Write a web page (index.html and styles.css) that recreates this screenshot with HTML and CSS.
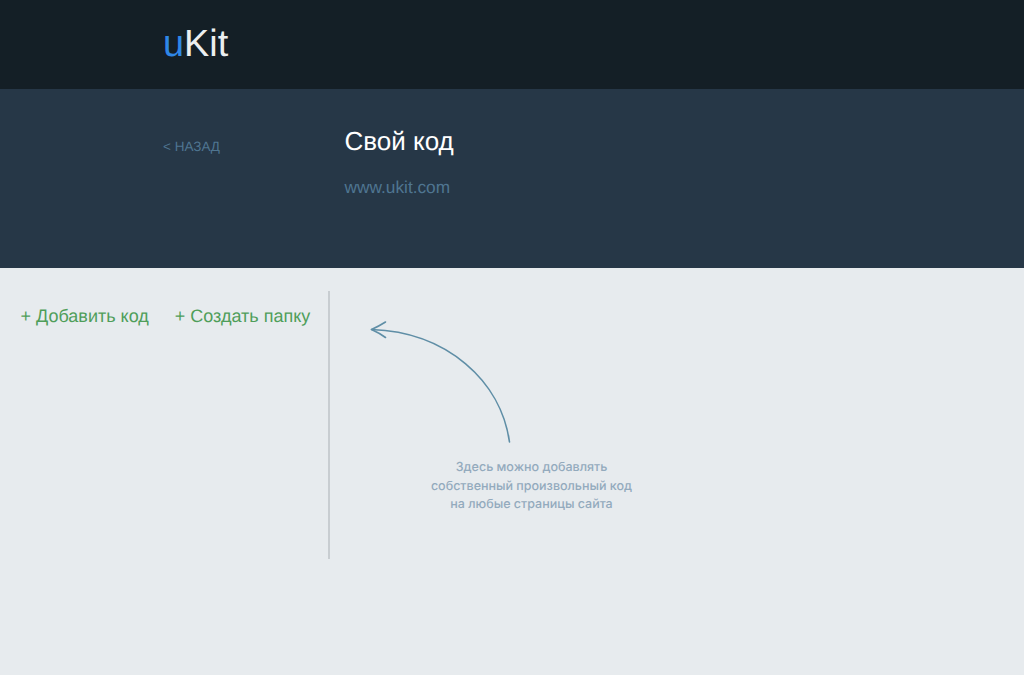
FILE: index.html
```html
<!DOCTYPE html>
<html lang="ru">
<head>
<meta charset="utf-8">
<title>uKit</title>
<link rel="stylesheet" href="styles.css">
</head>
<body>
<header class="topbar">
  <div class="logo"><span class="logo-u">u</span>Kit</div>
</header>
<section class="hero">
  <a class="back" href="#">&lt; НАЗАД</a>
  <div class="hero-text">
    <h1 class="title">Свой код</h1>
    <a class="site" href="#">www.ukit.com</a>
  </div>
</section>
<main class="content">
  <aside class="sidebar">
    <a class="action" href="#">+ Добавить код</a>
    <a class="action" href="#">+ Создать папку</a>
  </aside>
  <div class="empty">
    <svg class="arrow" width="150" height="125" viewBox="0 0 150 125" fill="none">
      <path d="M139.500 123C131 62 77 13 1.500 10.500" stroke="#5f8ea6" stroke-width="1.600" stroke-linecap="round"/>
      <path d="M15.500 3C10 6.500 6 8.500 1.500 10.500C6 12.500 10 14.500 15.500 18.500" stroke="#5f8ea6" stroke-width="1.600" stroke-linecap="round" stroke-linejoin="round"/>
    </svg>
    <p class="hint">Здесь можно добавлять<br>собственный произвольный код<br>на любые страницы сайта</p>
  </div>
</main>
</body>
</html>
```

FILE: styles.css
```css
* { box-sizing: border-box; }
html, body { margin: 0; height: 100%; }
body {
  background: #e7ebee;
  font-family: "Liberation Sans", Arial, sans-serif;
  text-rendering: geometricPrecision;
  overflow: hidden;
}
a { text-decoration: none; }
.topbar {
  height: 89px;
  background: #141f26;
  padding: 21px 0 0 163px;
}
.logo {
  font-size: 37.800px;
  line-height: 46px;
  color: #eceff0;
}
.logo-u { color: #2f87e6; }
.hero {
  height: 179px;
  background: #263747;
  display: flex;
  padding-left: 163px;
}
.back {
  width: 181.500px;
  padding-top: 49px;
  font-size: 13.500px;
  line-height: 17px;
  color: #4f7591;
}
.hero-text { padding-top: 37px; }
.title {
  margin: 0;
  font-size: 26px;
  line-height: 30px;
  font-weight: normal;
  color: #fff;
}
.site {
  display: block;
  margin-top: 21px;
  font-size: 17.300px;
  line-height: 20px;
  color: #4f7591;
}
.content {
  display: flex;
  padding-top: 23px;
  height: 291px;
}
.sidebar {
  width: 330px;
  height: 268px;
  border-right: 2px solid #c8cdd1;
  padding: 14px 0 0 20.500px;
  display: flex;
  gap: 26px;
  flex: none;
}
.action {
  font-size: 18px;
  line-height: 22px;
  color: #4f9e5a;
  white-space: nowrap;
}
.empty {
  padding: 28px 0 0 40px;
}
.arrow { display: block; }
.hint {
  margin: 15px 0 0 30px;
  width: 263px;
  text-align: center;
  font-family: "Inter", sans-serif;
  font-weight: 500;
  font-size: 12.500px;
  line-height: 18.500px;
  color: #93aabd;
}
```
